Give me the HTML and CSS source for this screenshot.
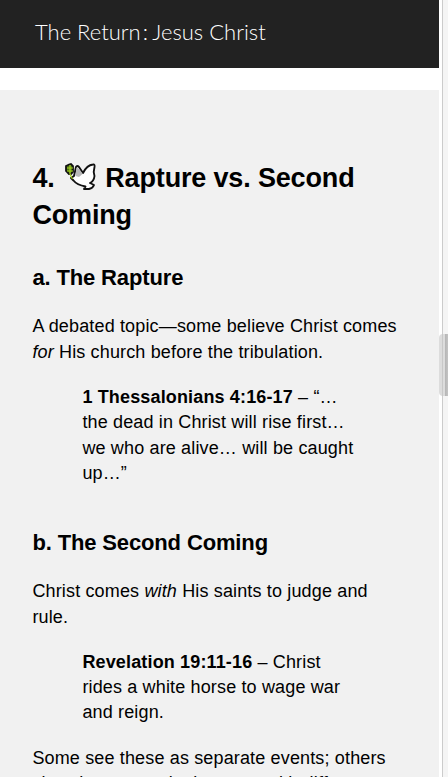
FILE: index.html
```html
<!DOCTYPE html>
<html lang="en">
<head>
    <meta charset="UTF-8">
    <meta name="viewport" content="width=device-width, initial-scale=1.0">
    <title>The Return : Jesus Christ</title>
    <link rel="stylesheet" href="styles.css">
</head>
<body>
    <div class="page">
        <header class="site-header">The Return <span class="colon">:</span> Jesus Christ</header>
        <main class="content">
            <h2>4. <svg class="dove" viewBox="0 0 32 28" role="img" aria-label="dove">
                <path d="M9 13 L11 4 Q12 2 14 4 L18 10 Q22 2 28 1.5 Q30 1 29.5 4 Q28 9 29.5 13 Q29 18 25 20 L29 22 Q28 25 24 26 L19 26 L20.5 23.5 Q12 22 8.5 17.5 L6 15Z" fill="#fff" stroke="#111" stroke-width="1.9" stroke-linejoin="round"/>
                <path d="M10.5 13 L11.5 4.5 Q15 6 17.5 11 L14 14Z" fill="#b8b8b8"/>
                <path d="M1 3 L4 1.5 L6 1 L8 3 V9 L6 11 H4 L1 8Z" fill="#4a7010" stroke="#111" stroke-width="1.8"/>
                <path d="M5 2V11L7.5 16M2 5H8M2 8H8" fill="none" stroke="#a6cf22" stroke-width="1.2"/>
            </svg> Rapture vs. Second Coming</h2>
            <h3>a. The Rapture</h3>
            <p>A debated topic—some believe Christ comes <em>for</em> His church before the tribulation.</p>
            <blockquote><strong>1 Thessalonians 4:16-17</strong> – “…the dead in Christ will rise first… we who are alive… will be caught up…”</blockquote>
            <h3>b. The Second Coming</h3>
            <p>Christ comes <em>with</em> His saints to judge and rule.</p>
            <blockquote><strong>Revelation 19:11-16</strong> – Christ rides a white horse to wage war and reign.</blockquote>
            <p>Some see these as separate events; others view them as a single return with different</p>
        </main>
    </div>
    <div class="scroll-track"><div class="scroll-thumb"></div></div>
</body>
</html>
```

FILE: styles.css
```css
* {
    box-sizing: border-box;
}

body {
    margin: 0;
    height: 777px;
    overflow: hidden;
    background: #fff;
    color: #000;
    font: 18px/25.2px "Liberation Sans", Arial, sans-serif;
    letter-spacing: 0.15px;
}

.page {
    width: 439px;
}

.site-header {
    height: 68px;
    padding: 0 35px;
    background: #222;
    color: #fff;
    font: 300 22px/64px Lato, sans-serif;
    letter-spacing: 0;
}

.colon {
    margin: 0 -1px 0 -4px;
}

.content {
    height: 687px;
    margin-top: 22px;
    padding: 70px 32px 0 32.4px;
    overflow: hidden;
    background: #f1f1f1;
}

h2 {
    margin: 0 0 28px;
    font-size: 27px;
    line-height: 37px;
    letter-spacing: -0.16px;
}

h3 {
    margin: 0 0 21.4px;
    font-size: 22px;
    line-height: 31px;
    letter-spacing: -0.14px;
}

p {
    margin: 0 0 20.3px;
}

blockquote {
    margin: 0 50px 20.5px;
}

blockquote + h3 {
    margin-top: 41px;
}

.dove {
    width: 32px;
    height: 28px;
    margin: 0 1px 0 3px;
    vertical-align: -4px;
}

.scroll-track {
    position: absolute;
    top: 0;
    right: 0;
    width: 6px;
    height: 777px;
    border-left: 1px solid #ccc;
    background: #f5f5f5;
}

.scroll-thumb {
    position: absolute;
    top: 334px;
    right: 0;
    width: 9px;
    height: 62px;
    border-radius: 4px 0 0 4px;
    background: linear-gradient(90deg, #dcdcdc 3px, #c8c8c8 3px, #c8c8c8 4px, #dcdcdc 4px, #dcdcdc 6px, #b5b5b5 6px, #c4c4c4);
}
```
